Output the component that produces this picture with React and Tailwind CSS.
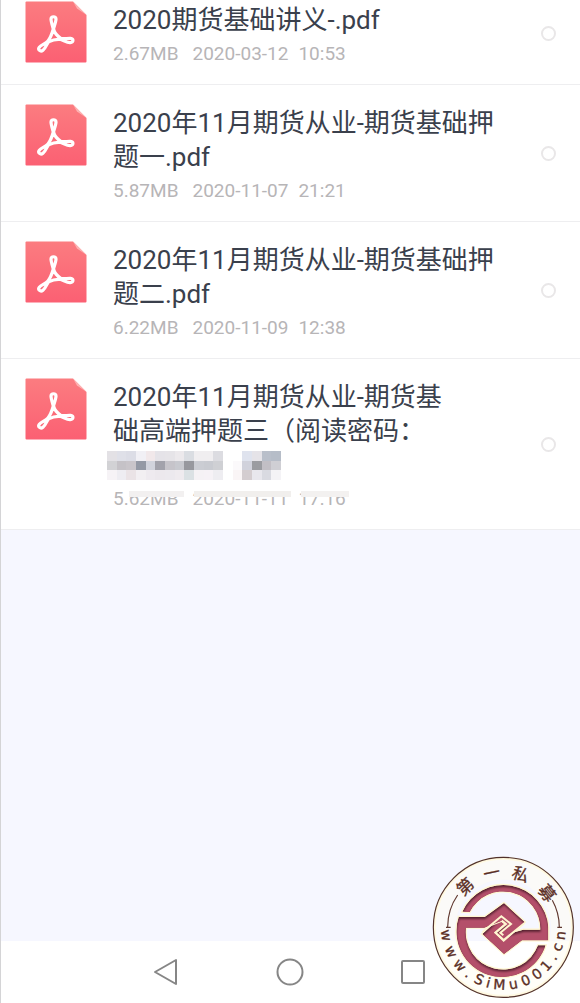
import React from "react";

const FILES = [
  { id: "a", lines: ["2020期货基础讲义-.pdf"], size: "2.67MB", date: "2020-03-12", time: "10:53" },
  { id: "b", lines: ["2020年11月期货从业-期货基础押", "题一.pdf"], size: "5.87MB", date: "2020-11-07", time: "21:21" },
  { id: "c", lines: ["2020年11月期货从业-期货基础押", "题二.pdf"], size: "6.22MB", date: "2020-11-09", time: "12:38" },
  { id: "d", lines: ["2020年11月期货从业-期货基", "础高端押题三（阅读密码："], masked: true, size: "5.62MB", date: "2020-11-11", time: "17:16" },
];

function PdfIcon() {
  return (
    <svg viewBox="0 0 62 62" className="size-[62px] shrink-0" aria-hidden="true">
      <defs>
        <linearGradient id="pdfRed" x1="0" y1="0" x2="0" y2="1">
          <stop offset="0" stopColor="#fb7c80" />
          <stop offset="1" stopColor="#fb6073" />
        </linearGradient>
      </defs>
      <path d="M1.5 .5H48L61.500 14V60.500Q61.500 61.500 60.500 61.500H1.500Q.5 61.500 .5 60.500V1.500Q.5 .5 1.500 .5Z" fill="url(#pdfRed)" />
      <path d="M48 .5L61.500 14L52 7.500Z" fill="#fdb3b3" />
      <g fill="none" stroke="#fff" strokeWidth="3.200" strokeLinejoin="round" strokeLinecap="round">
        <path d="M28.300 28C27.200 24 26 20.500 26 18C26.200 15 30.800 15 31 18C31 20.500 29.600 24 28.500 28C29.500 32 32.500 35.200 35.800 37.300C39 38.200 42 37.200 45.500 37.400C48.800 37.800 48.800 41.300 45.200 41.700C42 41.900 39 39.600 35.800 38.500C32 37.900 27 39.200 23.500 40.900C21.400 43.500 20.800 47 18 49.200C15.400 51.200 12.500 48.600 14.300 46.200C16.200 44 20 43 22.600 40.500C25.500 37 27.200 32 28.300 28Z" />
      </g>
    </svg>
  );
}

const MOSAIC = [
  ["#e3e1e5", "#dfe0e8", "#dcdde6", "#f1f0f5", "#f1e8ea", "#e5e3e8", "#e6e4e8", "#ece9ec", "#dadde2", "#f0eef0", "#f0eef0", "#dcdce1", "", "", "#dfe3ee", "#e5e3e8", "#b9bfca", "#b6bdc8"],
  ["#d2d2d5", "#c5c2c7", "#c9c5ca", "#9499a5", "#d1d3dc", "#a2a2ab", "#c6c4ca", "#c8c9cf", "#97989e", "#cbcdd3", "#c9cbd1", "#cfd0d4", "", "#fbf9fb", "#d1d2dc", "#9b9ca1", "#c2bfc5", "#cfcfd4"],
  ["#f6f3f6", "#eeedf2", "#eae3e6", "#f2eff2", "#eeeaef", "#ece8ed", "#ece9ee", "#efebef", "#dbe1e4", "#f5f2f5", "#f6f2f6", "#eeedf1", "", "#faf5f6", "#d4cdd0", "#e8e7ed", "#d9dae1", "#f4f3f6"],
];

function Mosaic() {
  return (
    <svg viewBox="0 0 180 30" preserveAspectRatio="none" shapeRendering="crispEdges" className="-ml-1.5 h-[29px] w-[174px]" aria-hidden="true">
      {MOSAIC.flatMap((row, y) =>
        row.map((c, x) => (c ? <rect key={`${x}-${y}`} x={x * 10} y={y * 10} width="10" height="10" fill={c} /> : null))
      )}
    </svg>
  );
}

function FileRow({ file }) {
  return (
    <li className="border-b border-[#eeeef0] bg-white">
      <label htmlFor={`file-${file.id}`} className="flex pr-6 pb-[13px] pl-6">
        <span className="pt-[19px]">
          <PdfIcon />
        </span>
        <span className="ml-[26px] flex-1 pt-[21px]">
          {file.lines.map((line) => (
            <span key={line} className="block text-[26px] leading-[34px] whitespace-nowrap text-[#3a404c]">{line}</span>
          ))}
          {file.masked && (
            <span className="flex h-[34px] items-center">
              <Mosaic />
            </span>
          )}
          <span className="relative flex text-[19px] leading-[34px] whitespace-nowrap text-[#b7b5b7]">
            <span>{file.size}</span>
            <span className="ml-[14px]">{file.date}</span>
            <span className="ml-[10px]">{file.time}</span>
            {file.masked && (
              <span className="absolute top-[9px] left-4 flex h-[6px] gap-2.5">
                <span className="w-[55px] bg-[#f2f0f0]" />
                <span className="w-[97px] bg-[#f1efed]" />
                <span className="w-12 bg-[#f3f1f0]" />
              </span>
            )}
          </span>
        </span>
        <input
          id={`file-${file.id}`}
          type="radio"
          name="file"
          className="mt-[13px] size-[15px] shrink-0 appearance-none self-center rounded-full border-2 border-[#e9e7e8] bg-white"
        />
      </label>
    </li>
  );
}

const RING_TEXT = [
  ["w", 82], ["w", 65], ["w", 49], [".", 37], ["S", 25], ["i", 15], ["M", 4], ["u", -10],
  ["0", -23], ["0", -36], ["1", -48], [".", -59], ["c", -70], ["n", -82],
];
const NAME_TEXT = [["第", -43], ["一", -12], ["私", 18], ["募", 52]];

const UPPER = "M127 200A135 135 0 0 1 385 247V286H306L252 327L187 267L244 214L272 236L240 263L250 271L310 254H361A112 112 0 0 0 149 201Z";
const LOWER = "M377 301A135 135 0 0 1 116 216H194L252 174L314 231L251 286L227 263L258 237L245 227L193 248H138A112 112 0 0 0 354 301Z";

function Swoosh({ id, d }) {
  return (
    <g>
      <clipPath id={id}><path d={d} /></clipPath>
      <path d={d} fill="#fff9d8" stroke="#fff6d0" strokeWidth="7" />
      <g clipPath={`url(#${id})`}>
        <path d={d} fill="#54202f" />
        <path d={d} fill="#b4506a" transform="translate(1 6)" filter="url(#softEdge)" />
      </g>
    </g>
  );
}

function Seal() {
  return (
    <svg viewBox="0 0 480 474" className="h-[158px] w-[160px]" role="img" aria-label="第一私募 www.SiMu001.cn">
      <defs>
        <filter id="softEdge" x="-10%" y="-10%" width="120%" height="120%"><feGaussianBlur stdDeviation="3" /></filter>
      </defs>
      <circle cx="250" cy="247" r="207" fill="none" stroke="#fff8dd" strokeWidth="9" />
      <circle cx="250" cy="247" r="174" fill="none" stroke="#fffdf2" strokeWidth="62" opacity=".5" />
      <circle cx="250" cy="247" r="210" fill="none" stroke="#50302b" strokeWidth="3.500" />
      <path d="M78 247H92M83 247A168 168 0 0 1 113 150M412 247H426M418 247A168 168 0 0 0 397 166" fill="none" stroke="#60382f" strokeWidth="3.500" />
      <Swoosh id="sealUpper" d={UPPER} />
      <Swoosh id="sealLower" d={LOWER} />
      <path d="M187 262L244 214L273 237L241 263L250 271M313 235L251 285L227 263L258 237L245 227" fill="none" stroke="#fff6d0" strokeWidth="6" />
      <g fill="#5a2e25" stroke="#5a2e25" strokeWidth="1" textAnchor="middle">
        {NAME_TEXT.map(([ch, a]) => (
          <text key={ch} x="250" y="98" fontSize="50" className="font-['Noto_Sans_CJK_SC',sans-serif]" transform={`rotate(${a} 250 247)`}>{ch}</text>
        ))}
        {RING_TEXT.map(([ch, a], i) => (
          <text key={i} x="250" y="434" fontSize="42" className="font-['DejaVu_Sans',sans-serif]" transform={`rotate(${a} 250 247)`}>{ch}</text>
        ))}
      </g>
    </svg>
  );
}

function NavButton({ label, children }) {
  return (
    <button type="button" aria-label={label} className="flex size-8 items-center justify-center">
      <svg viewBox="0 0 32 32" className="size-8" fill="none" stroke="#868686" strokeWidth="2" strokeLinejoin="round">
        {children}
      </svg>
    </button>
  );
}

export default function App() {
  return (
    <div className="relative flex min-h-screen flex-col overflow-hidden border-l border-[#d4d4d6] bg-[#f6f7ff] font-[Roboto,'Noto_Sans_CJK_SC',sans-serif]">
      <main className="flex-1">
        <ul className="-mt-[18px]">
          {FILES.map((f) => <FileRow key={f.id} file={f} />)}
        </ul>
      </main>
      <nav className="flex h-[62px] items-center justify-center gap-[91px] bg-white pr-px">
        <NavButton label="返回"><path d="M4 16L25 4V28Z" /></NavButton>
        <NavButton label="主页"><circle cx="16" cy="16" r="12.500" /></NavButton>
        <NavButton label="最近任务"><rect x="5" y="5" width="22" height="22" rx="1" /></NavButton>
      </nav>
      <div className="pointer-events-none absolute right-0 bottom-0">
        <Seal />
      </div>
    </div>
  );
}
